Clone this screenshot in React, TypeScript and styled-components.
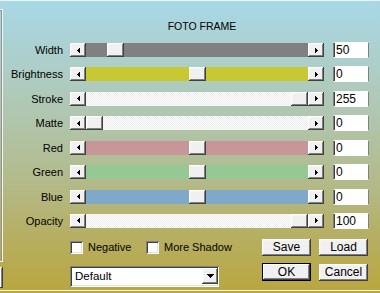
import React from 'react';
import styled, { createGlobalStyle, css } from 'styled-components';

const FONT = `"Liberation Sans", Arial, sans-serif`;

const GlobalStyle = createGlobalStyle`
  html, body { margin: 0; padding: 0; }
  body { width: 380px; height: 293px; overflow: hidden; font-family: ${FONT}; }
`;

const raised = css`
  background: #f0f0f0;
  box-shadow: inset -1px -1px #404040, inset 1px 1px #ffffff, inset -2px -2px #808080, inset 2px 2px #f4f4f4;
`;

const sunken = css`
  background: #ffffff;
  box-shadow: inset 1px 1px #808080, inset -1px -1px #ffffff, inset 2px 2px #404040, inset -2px -2px #e0e0e0;
`;

const Frame = styled.div`
  width: 380px;
  height: 293px;
  box-sizing: border-box;
  background: linear-gradient(to bottom, #a8d8e6 0%, #adcfcc 20%, #b0c6ae 40%, #b3ba8a 62%, #b6ae60 82%, #b9a63e 100%);
  font-family: ${FONT};
  color: #000;
`;

const Body = styled.div`
  display: flex;
  height: 291px;
  box-sizing: border-box;
  border-top: 1px solid #eef2f2;
  border-bottom: 1px solid #f2f2ee;
`;

const LeftStrip = styled.div`
  width: 3px;
  flex: none;
  display: flex;
  flex-direction: column;
  padding-top: 8px;
  gap: 5px;
`;

const PreviewEdge = styled.div`
  height: 253px;
  box-sizing: border-box;
  border-top: 1px solid #f6f6f6;
  border-right: 1px solid #f6f6f6;
  border-bottom: 1px solid #f6f6f6;
  box-shadow: inset -1px 1px #909090;
`;

const EdgeButton = styled.div`
  height: 21px;
  ${raised};
`;

const Main = styled.div`
  flex: 1;
  display: flex;
  flex-direction: column;
`;

const Title = styled.div`
  margin-top: 18px;
  height: 14px;
  line-height: 14px;
  font-size: 10.5px;
  text-align: center;
  padding-left: 21px;
`;

const Rows = styled.div`
  margin-top: 9px;
  display: flex;
  flex-direction: column;
  gap: 8.43px;
`;

const Row = styled.div`
  display: flex;
  align-items: center;
  height: 16px;
`;

const Label = styled.div`
  width: 60px;
  margin-right: 7px;
  text-align: right;
  font-size: 11px;
  line-height: 16px;
  white-space: nowrap;
`;

const Scroll = styled.div`
  width: 254px;
  height: 14px;
  margin-right: 9px;
  display: flex;
`;

const ArrowBtn = styled.div`
  width: 16px;
  height: 14px;
  flex: none;
  display: flex;
  align-items: center;
  justify-content: center;
  ${raised};
`;

const Track = styled.div<{ $fill: string; $checker?: boolean }>`
  flex: 1;
  position: relative;
  background: ${(p) => p.$fill};
  ${(p) =>
    p.$checker &&
    css`
      background: repeating-conic-gradient(#ffffff 0 25%, #ececec 0 50%) 0 0 / 2px 2px;
    `}
`;

const Thumb = styled.div`
  position: absolute;
  top: 0;
  width: 17px;
  height: 14px;
  ${raised};
`;

const ValueBox = styled.div`
  width: 36px;
  height: 16px;
  box-sizing: border-box;
  background: #fff;
  border-left: 1px solid #808080;
  border-right: 1px solid #808080;
  border-top: 1px solid #ffffff;
  border-bottom: 1px solid #ffffff;
  box-shadow: inset 1px 0 #404040;
  font-size: 12px;
  line-height: 14px;
  padding-left: 2px;
`;

const Lower = styled.div`
  margin-top: 10px;
  padding-left: 67px;
  display: grid;
  grid-template-columns: 184px 49px 49px;
  grid-template-rows: 17px 23px;
  column-gap: 8px;
  row-gap: 8px;
`;

const Checks = styled.div`
  display: grid;
  grid-template-columns: 76px auto;
  align-items: center;
`;

const CheckItem = styled.label`
  display: flex;
  align-items: center;
  gap: 5px;
  font-size: 11px;
  white-space: nowrap;
`;

const CheckBox = styled.span`
  width: 13px;
  height: 13px;
  flex: none;
  ${sunken};
`;

const Button = styled.div<{ $default?: boolean }>`
  height: 17px;
  display: flex;
  align-items: center;
  justify-content: center;
  font-size: 12px;
  ${raised};
  ${(p) =>
    p.$default &&
    css`
      height: 18px;
      margin-top: -1px;
      box-shadow: inset 0 0 0 1px #000000, inset -2px -2px #404040, inset 2px 2px #ffffff, inset -3px -3px #808080;
    `}
`;

const Select = styled.div`
  grid-column: 1 / 2;
  width: 149px;
  height: 21px;
  margin-top: 2px;
  box-sizing: border-box;
  padding: 2px 1px 3px 2px;
  display: flex;
  align-items: center;
  ${sunken};
`;

const SelectText = styled.div`
  flex: 1;
  font-size: 11.5px;
  padding-left: 3px;
`;

const SelectBtn = styled.div`
  width: 16px;
  height: 16px;
  display: flex;
  align-items: center;
  justify-content: center;
  ${raised};
`;

const LeftArrow = () => (
  <svg width="3" height="5" viewBox="0 0 3 5" shapeRendering="crispEdges">
    <polygon points="3,0 0,2.5 3,5" fill="#000" />
  </svg>
);
const RightArrow = () => (
  <svg width="3" height="5" viewBox="0 0 3 5" shapeRendering="crispEdges">
    <polygon points="0,0 3,2.5 0,5" fill="#000" />
  </svg>
);
const DownArrow = () => (
  <svg width="7" height="4" viewBox="0 0 7 4" shapeRendering="crispEdges">
    <polygon points="0,0 7,0 3.5,4" fill="#000" />
  </svg>
);

type SliderDef = { label: string; value: number; frac: number; fill: string; checker?: boolean };

const sliders: SliderDef[] = [
  { label: 'Width', value: 50, frac: 0.102, fill: '#808080' },
  { label: 'Brightness', value: 0, frac: 0.5, fill: '#c8c832' },
  { label: 'Stroke', value: 255, frac: 1, fill: '#fff', checker: true },
  { label: 'Matte', value: 0, frac: 0, fill: '#fff', checker: true },
  { label: 'Red', value: 0, frac: 0.5, fill: '#c89698' },
  { label: 'Green', value: 0, frac: 0.5, fill: '#96c896' },
  { label: 'Blue', value: 0, frac: 0.5, fill: '#80a8c8' },
  { label: 'Opacity', value: 100, frac: 1, fill: '#fff', checker: true },
];

const TRACK_RANGE = 222 - 17;

export default function App() {
  return (
    <>
      <GlobalStyle />
      <Frame>
        <Body>
          <LeftStrip>
            <PreviewEdge />
            <EdgeButton />
          </LeftStrip>
          <Main>
            <Title>FOTO FRAME</Title>
            <Rows>
              {sliders.map((s) => (
                <Row key={s.label}>
                  <Label>{s.label}</Label>
                  <Scroll>
                    <ArrowBtn>
                      <LeftArrow />
                    </ArrowBtn>
                    <Track $fill={s.fill} $checker={s.checker}>
                      <Thumb style={{ left: Math.round(s.frac * TRACK_RANGE) }} />
                    </Track>
                    <ArrowBtn>
                      <RightArrow />
                    </ArrowBtn>
                  </Scroll>
                  <ValueBox>{s.value}</ValueBox>
                </Row>
              ))}
            </Rows>
            <Lower>
              <Checks>
                <CheckItem>
                  <CheckBox />
                  Negative
                </CheckItem>
                <CheckItem>
                  <CheckBox />
                  More Shadow
                </CheckItem>
              </Checks>
              <Button>Save</Button>
              <Button>Load</Button>
              <Select>
                <SelectText>Default</SelectText>
                <SelectBtn>
                  <DownArrow />
                </SelectBtn>
              </Select>
              <Button $default>OK</Button>
              <Button>Cancel</Button>
            </Lower>
          </Main>
        </Body>
      </Frame>
    </>
  );
}
